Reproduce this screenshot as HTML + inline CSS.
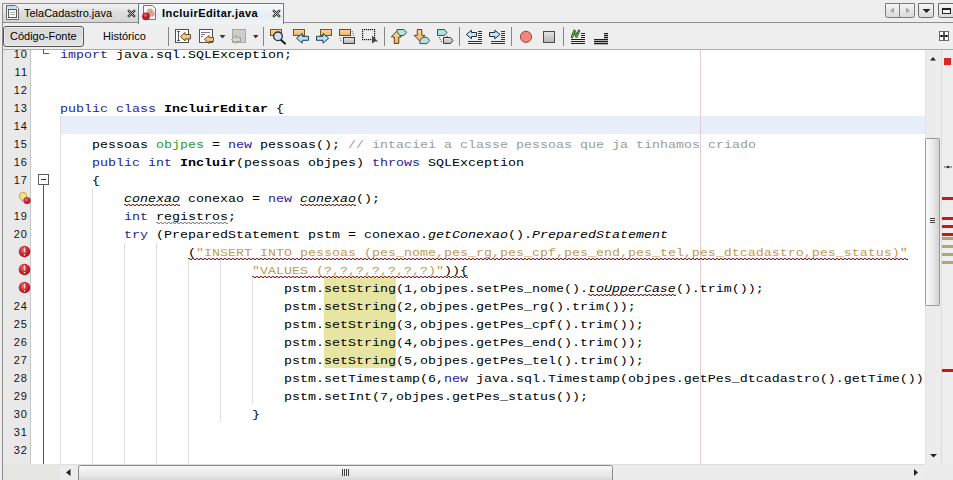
<!DOCTYPE html>
<html><head><meta charset="utf-8">
<style>
*{margin:0;padding:0;box-sizing:border-box}
html,body{width:953px;height:480px;overflow:hidden;background:#eeeeee;font-family:"Liberation Sans",sans-serif;font-size:11px;color:#000}
.a{position:absolute}
/* tabs */
#tab1{left:2px;top:3px;width:137px;height:20px;border:1px solid #8d8d8d;background:linear-gradient(#f2f2f2,#dedede 50%,#d4d4d4)}
#tab2{left:138px;top:3px;width:146px;height:21px;border:1px solid #6f7a84;border-bottom:none;background:linear-gradient(#f4f8fb,#e6eef4 60%,#eef3f6)}
#tabline{left:283px;top:22px;width:670px;height:1px;background:#8d8d8d}
.tt{top:6px;line-height:14px;white-space:nowrap}
/* toolbar */
#btn1{left:3px;top:26px;width:81px;height:21px;border:1px solid #555;border-radius:3px;background:linear-gradient(#d6d6d6,#dcdcdc 50%,#e4e4e4);box-shadow:inset 0 0 0 1px #ececec}
.sep{width:1px;background:#9a9a9a;top:27px;height:19px}
/* editor */
#edtop{left:2px;top:49px;width:951px;height:1px;background:#a3adb7}
#lborder{left:2px;top:3px;width:1px;height:477px;background:#8a8a8a}
#gutter{left:3px;top:50px;width:27px;height:414px;background:#e9e9e9}
#gline{left:30px;top:50px;width:1px;height:414px;background:#c6c6c6}
#fold{left:31px;top:50px;width:29px;height:414px;background:#fff}
#text{left:60px;top:50px;width:865px;height:414px;background:#fff;overflow:hidden}
.ln{position:absolute;left:0;width:25px;margin-top:1px;text-align:right;font-size:11px;letter-spacing:1px;line-height:18px;color:#111}
.cl{position:absolute;left:0;white-space:pre;font-family:"Liberation Mono",monospace;font-size:13.333px;line-height:18px;color:#000;margin-top:1.5px;transform:scaleY(0.87);transform-origin:0 12.5px}
.k{color:#1e1e96}
.b{font-weight:bold}
.g{color:#2d9a2d}
.c{color:#9b9b9b}
.s{color:#c29a55}
.i{font-style:italic}
.hl{background:#e6e6a2}
.guide{position:absolute;width:1px;background:#dfdfdf}
</style></head><body>

<!-- tab bar -->
<div id="lborder" class="a"></div>
<div id="tab1" class="a"></div>
<div id="tab2" class="a"></div>
<div id="tabline" class="a"></div>
<div class="a tt" style="left:24px">TelaCadastro.java</div>
<div class="a tt b" style="left:162px;letter-spacing:0.45px">IncluirEditar.java</div>

<!-- toolbar -->
<div id="btn1" class="a"></div>
<div class="a" style="left:10px;top:29px;line-height:14px">Código-Fonte</div>
<div class="a" style="left:103px;top:29px;line-height:14px">Histórico</div>

<!-- ICONS -->
<svg class="a" style="left:0;top:0" width="953" height="50" viewBox="0 0 953 50">
<defs>
<linearGradient id="gbtn" x1="0" y1="0" x2="0" y2="1"><stop offset="0" stop-color="#f6f6f6"/><stop offset="1" stop-color="#d9d9d9"/></linearGradient>
<linearGradient id="gsq" x1="0" y1="0" x2="0" y2="1"><stop offset="0" stop-color="#e6e6e6"/><stop offset="1" stop-color="#b4b4b4"/></linearGradient>
<linearGradient id="gor" x1="0" y1="0" x2="0" y2="1"><stop offset="0" stop-color="#f7d9a4"/><stop offset="1" stop-color="#e9b36a"/></linearGradient>
</defs>
<!-- tab1 icon -->
<path d="M6.5,5.5 H15.5 L18.5,8.5 V19.5 H6.5 Z" fill="#f2f6fa" stroke="#6a6a6a"/>
<rect x="7" y="6" width="8.5" height="3.5" fill="#c9dcee"/>
<rect x="8.5" y="9.5" width="8" height="8" fill="#fbfdf8" stroke="#585858"/>
<rect x="10" y="12" width="5" height="1" fill="#a8b8a8"/>
<rect x="10" y="14" width="5" height="1" fill="#a8b8a8"/>
<!-- tab close x -->
<g stroke-linecap="round" fill="none">
<path d="M128.8,10.8 L134.2,16.2 M134.2,10.8 L128.8,16.2" stroke="#333" stroke-width="2.5"/>
<path d="M128.8,10.8 L134.2,16.2 M134.2,10.8 L128.8,16.2" stroke="#d8d8d8" stroke-width="0.8"/>
<path d="M273.8,10.8 L279.2,16.2 M279.2,10.8 L273.8,16.2" stroke="#333" stroke-width="2.5"/>
<path d="M273.8,10.8 L279.2,16.2 M279.2,10.8 L273.8,16.2" stroke="#e6eef2" stroke-width="0.8"/>
</g>
<!-- tab2 java icon -->
<path d="M143.5,5.5 H152.5 L155.5,8.5 V19.5 H143.5 Z" fill="#f6f4f4" stroke="#757575"/>
<circle cx="150" cy="11.5" r="3" fill="#d9ab82"/>
<circle cx="152" cy="14" r="2.3" fill="#e3a89a" stroke="#b07060" stroke-width="0.6"/>
<circle cx="146" cy="16.3" r="3.9" fill="#b51d2a"/>
<circle cx="145.3" cy="15.2" r="1.6" fill="#e05a60"/>
<!-- right tab buttons -->
<path d="M885.5,3.5 H914.5 V15.5 Q914.5,17.5 912.5,17.5 H887.5 Q885.5,17.5 885.5,15.5 Z" fill="url(#gbtn)" stroke="#7b7b7b"/>
<line x1="899.5" y1="4" x2="899.5" y2="17" stroke="#7b7b7b"/>
<polygon points="894,7.5 894,13.5 890,10.5" fill="#a6a6a6"/>
<polygon points="906,7.5 906,13.5 910,10.5" fill="#a6a6a6"/>
<path d="M918.5,3.5 H933.5 V15.5 Q933.5,17.5 931.5,17.5 H920.5 Q918.5,17.5 918.5,15.5 Z" fill="url(#gbtn)" stroke="#6b6b6b"/>
<polygon points="922.5,9 930.5,9 926.5,13" fill="#222"/>
<path d="M938.5,3.5 H955 V17.5 H940.5 Q938.5,17.5 938.5,15.5 Z" fill="url(#gbtn)" stroke="#6b6b6b"/>
<rect x="942.5" y="8.5" width="8" height="5" fill="#f4f4f4" stroke="#222"/>
<rect x="942" y="8" width="9" height="2" fill="#222"/>
<!-- toolbar icon 1: I-beam + arrow -->
<rect x="175.5" y="29.5" width="13" height="13" fill="#fdfdfd" stroke="#505050"/>
<path d="M177,31.5 H180 M178.5,31.5 V40.5 M177,40.5 H180" stroke="#555" fill="none"/>
<path d="M180.5,36.5 L185,32.5 V34.5 H190.5 V39 H185 V41 Z" fill="url(#gor)" stroke="#6e4f1c"/>
<!-- icon 2 -->
<rect x="199.5" y="29.5" width="13" height="13" fill="#fbfbfd" stroke="#525252"/>
<path d="M201,32.5 H210 M201,34.5 H205 M201,36.5 H203" stroke="#7a7a8a" fill="none"/>
<path d="M204.5,39.5 L209,35.5 V37.5 H213.5 V41.5 H209 V43.5 Z" fill="url(#gor)" stroke="#6e4f1c"/>
<polygon points="219.5,35 225.5,35 222.5,38.5" fill="#3a3a3a"/>
<!-- icon 3 disabled -->
<rect x="232.5" y="29.5" width="13" height="13" fill="#cdcdcd" stroke="#a8a8a8"/>
<path d="M231.5,39.5 L236,35.5 V37.5 H240.5 V41.5 H236 V43.5 Z" fill="#d6d6cc" stroke="#a0a098"/>
<polygon points="253,35 258.5,35 255.7,38.5" fill="#333"/>
<!-- separators -->
<g fill="#868686">
<rect x="168" y="27" width="1" height="19"/>
<rect x="263" y="27" width="1" height="19"/>
<rect x="384" y="27" width="1" height="19"/>
<rect x="459" y="27" width="1" height="19"/>
<rect x="511" y="27" width="1" height="19"/>
<rect x="563" y="27" width="1" height="19"/>
</g>
<!-- search -->
<rect x="270.5" y="29.5" width="11" height="6" fill="url(#gor)" stroke="#745625"/>
<line x1="280.5" y1="39.5" x2="285" y2="43.5" stroke="#222" stroke-width="2.2" stroke-linecap="round"/>
<circle cx="278" cy="36.3" r="4.3" fill="#cfe3ef" stroke="#2c2c2c" stroke-width="1.3"/>
<!-- back -->
<rect x="293.5" y="29.5" width="11" height="6" fill="url(#gor)" stroke="#745625"/>
<path d="M296.5,38.3 L302.2,33.5 V36.3 H308.5 V40.3 H302.2 V43.2 Z" fill="#b9def3" stroke="#1f3f55"/>
<!-- forward -->
<rect x="320.5" y="29.5" width="11" height="6" fill="url(#gor)" stroke="#745625"/>
<path d="M328.7,38.3 L323,33.5 V36.3 H316.5 V40.3 H323 V43.2 Z" fill="#b9def3" stroke="#1f3f55"/>
<!-- toggle -->
<rect x="339.5" y="29.5" width="11" height="6" fill="url(#gor)" stroke="#6a4d1e"/>
<rect x="343.5" y="37.5" width="11" height="6" fill="url(#gsq)" stroke="#3e3e3e"/>
<path d="M352,31 L354,36 M340,38 L341.5,42" stroke="#555" stroke-dasharray="1,1" fill="none"/>
<!-- select rect -->
<g fill="#111"><rect x="362" y="29" width="1.2" height="1.2"/><rect x="362" y="31" width="1.2" height="1.2"/><rect x="362" y="33" width="1.2" height="1.2"/><rect x="362" y="35" width="1.2" height="1.2"/><rect x="362" y="37" width="1.2" height="1.2"/><rect x="362" y="39" width="1.2" height="1.2"/><rect x="364" y="29" width="1.2" height="1.2"/><rect x="364" y="39" width="1.2" height="1.2"/><rect x="366" y="29" width="1.2" height="1.2"/><rect x="366" y="39" width="1.2" height="1.2"/><rect x="368" y="29" width="1.2" height="1.2"/><rect x="368" y="39" width="1.2" height="1.2"/><rect x="370" y="29" width="1.2" height="1.2"/><rect x="370" y="39" width="1.2" height="1.2"/><rect x="372" y="29" width="1.2" height="1.2"/><rect x="372" y="39" width="1.2" height="1.2"/><rect x="374" y="29" width="1.2" height="1.2"/><rect x="374" y="31" width="1.2" height="1.2"/><rect x="374" y="33" width="1.2" height="1.2"/><rect x="374" y="35" width="1.2" height="1.2"/><rect x="374" y="37" width="1.2" height="1.2"/><rect x="374" y="39" width="1.2" height="1.2"/></g>
<polygon points="372,35.5 378,41.5 375,41.5 372,43.5" fill="#444"/>
<!-- up -->
<path d="M397,29.5 H404 L406.5,32.3 L404,35.5 H397 Z" fill="#b5e2dc" stroke="#2d5a55"/>
<path d="M396.3,31.5 L401.5,37 H398.8 V43.5 H394.3 V37 H391.3 Z" fill="url(#gor)" stroke="#5e4418"/>
<!-- down -->
<path d="M419.8,37.3 H427 L429.6,40.5 L427,43.6 H419.8 Z" fill="#b5e2dc" stroke="#2d5a55"/>
<path d="M417.3,29.5 H421.8 V35.3 H425 L419.5,40.8 L414,35.3 H417.3 Z" fill="url(#gor)" stroke="#5e4418"/>
<!-- third tags -->
<path d="M437.5,29.5 H444.5 L447,32.5 L444.5,35.5 H437.5 Z" fill="#b0e0da" stroke="#2d5a55"/>
<path d="M443.5,37.5 H450.5 L453,40.5 L450.5,43.5 H443.5 Z" fill="url(#gsq)" stroke="#3c3c3c"/>
<path d="M439,37 L442,43 M447,36 L447,37" stroke="#333" stroke-dasharray="1,1.2" fill="none"/>
<!-- shift left -->
<path d="M466.3,34.5 L471.5,30.2 V32.5 H476.5 V36.5 H471.5 V38.8 Z" fill="#c6e4f5" stroke="#1f2f3f"/>
<g fill="#333">
<rect x="478" y="31" width="4" height="1"/><rect x="478" y="33" width="4" height="1"/><rect x="478" y="35" width="4" height="1"/><rect x="478" y="37" width="4" height="1"/><rect x="478" y="39" width="4" height="1"/>
<rect x="468" y="41" width="14" height="1"/><rect x="468" y="43" width="14" height="1"/>
<rect x="501" y="31" width="4" height="1"/><rect x="501" y="33" width="4" height="1"/><rect x="501" y="35" width="4" height="1"/><rect x="501" y="37" width="4" height="1"/><rect x="501" y="39" width="4" height="1"/>
<rect x="491" y="41" width="14" height="1"/><rect x="491" y="43" width="14" height="1"/>
</g>
<path d="M500,34.5 L494.8,30.2 V32.5 H489.5 V36.5 H494.8 V38.8 Z" fill="#c6e4f5" stroke="#1f2f3f"/>
<!-- record / stop -->
<circle cx="526" cy="36.8" r="5.6" fill="#f2877a" stroke="#8f4a48"/>
<rect x="543.5" y="31.5" width="11" height="11" fill="url(#gsq)" stroke="#4a4a4a"/>
<!-- N icon -->
<path d="M572,37 L574.5,30.8 L576.5,36.5 L579,30.8" fill="none" stroke="#224a18" stroke-width="2.4" stroke-linejoin="round" stroke-linecap="round"/>
<path d="M572,37 L574.5,30.8 L576.5,36.5 L579,30.8" fill="none" stroke="#78d058" stroke-width="0.9" stroke-linejoin="round"/>
<g fill="#1e1e1e">
<rect x="581" y="33" width="4" height="1"/><rect x="581" y="35" width="4" height="1"/><rect x="581" y="37" width="4" height="1"/>
<rect x="571" y="39" width="14" height="1"/><rect x="571" y="41" width="14" height="1"/><rect x="571" y="43" width="14" height="1"/>
<rect x="604" y="33" width="4" height="1.3"/><rect x="604" y="35" width="4" height="1.3"/><rect x="604" y="37" width="4" height="1.3"/>
<rect x="594" y="39" width="14" height="1.3"/><rect x="594" y="41" width="14" height="1.3"/><rect x="594" y="43" width="14" height="1.3"/>
</g>
<!-- split icon -->
<rect x="939.5" y="31.5" width="9" height="9" fill="#fff" stroke="#6a6a6a"/>
<path d="M940,36 H948 M944,32 V40" stroke="#000" stroke-width="1.2"/>
<circle cx="941.5" cy="36" r="1" fill="#000"/><circle cx="946.5" cy="36" r="1" fill="#000"/>
</svg>
<!-- /ICONS -->
<!-- editor -->
<div id="edtop" class="a"></div>
<div id="gutter" class="a" style="overflow:hidden">
  <div class="ln" style="top:-6px">10</div>
  <div class="ln" style="top:12px">11</div>
  <div class="ln" style="top:30px">12</div>
  <div class="ln" style="top:48px">13</div>
  <div class="ln" style="top:66px">14</div>
  <div class="ln" style="top:84px">15</div>
  <div class="ln" style="top:102px">16</div>
  <div class="ln" style="top:120px">17</div>
  <div class="ln" style="top:156px">19</div>
  <div class="ln" style="top:174px">20</div>
  <div class="ln" style="top:246px">24</div>
  <div class="ln" style="top:264px">25</div>
  <div class="ln" style="top:282px">26</div>
  <div class="ln" style="top:300px">27</div>
  <div class="ln" style="top:318px">28</div>
  <div class="ln" style="top:336px">29</div>
  <div class="ln" style="top:354px">30</div>
  <div class="ln" style="top:372px">31</div>
  <div class="ln" style="top:390px">32</div>
</div>
<div id="gline" class="a"></div>
<div id="fold" class="a"></div>
<div id="text" class="a">
  <!-- current line -->
  <div class="a" style="left:0;top:66px;width:865px;height:18px;background:#e8eef9"></div>
  <!-- right margin -->
  <div class="a" style="left:640px;top:0;width:1px;height:414px;background:#e3cdd0"></div>
  <!-- guides -->
  <div class="guide" style="left:0;top:66px;height:348px"></div>
  <div class="guide" style="left:32px;top:138px;height:276px"></div>
  <div class="guide" style="left:64px;top:192px;height:222px"></div>
  <div class="guide" style="left:96px;top:192px;height:222px"></div>
  <div class="guide" style="left:128px;top:210px;height:204px"></div>
  <div class="guide" style="left:160px;top:210px;height:162px"></div>
  <div class="guide" style="left:192px;top:228px;height:126px"></div>
  <!-- highlights -->
  <div class="a hl" style="left:264px;top:228px;width:72px;height:90px"></div>
  <div id="code">
  <div class="cl" style="top:-6px"><span class="k">import</span> java.sql.SQLException;</div>
  <div class="cl" style="top:48px"><span class="k">public</span> <span class="k">class</span> <span class="b">IncluirEditar</span> {</div>
  <div class="cl" style="top:84px">    pessoas <span class="g">objpes</span> = <span class="k">new</span> pessoas(); <span class="c">// intaciei a classe pessoas que ja tinhamos criado</span></div>
  <div class="cl" style="top:102px">    <span class="k">public</span> <span class="k">int</span> <span class="b">Incluir</span>(pessoas objpes) <span class="k">throws</span> SQLException</div>
  <div class="cl" style="top:120px">    {</div>
  <div class="cl" style="top:138px">        <span class="i er">conexao</span> conexao = <span class="k">new</span> <span class="i er">conexao</span>();</div>
  <div class="cl" style="top:156px">        <span class="k">int</span> <span class="wr">registros</span>;</div>
  <div class="cl" style="top:174px">        <span class="k">try</span> (PreparedStatement pstm = conexao.<span class="i">getConexao</span>().<span class="i">PreparedStatement</span></div>
  <div class="cl" style="top:192px">                <span class="er">(<span class="s">"INSERT INTO pessoas (pes_nome,pes_rg,pes_cpf,pes_end,pes_tel,pes_dtcadastro,pes_status)"</span></span></div>
  <div class="cl" style="top:210px">                        <span class="er"><span class="s">"VALUES (?,?,?,?,?,?,?)"</span>)){</span></div>
  <div class="cl" style="top:228px">                            pstm.setString(1,objpes.setPes_nome().<span class="i er">toUpperCase</span>().trim());</div>
  <div class="cl" style="top:246px">                            pstm.setString(2,objpes.getPes_rg().trim());</div>
  <div class="cl" style="top:264px">                            pstm.setString(3,objpes.getPes_cpf().trim());</div>
  <div class="cl" style="top:282px">                            pstm.setString(4,objpes.getPes_end().trim());</div>
  <div class="cl" style="top:300px">                            pstm.setString(5,objpes.getPes_tel().trim());</div>
  <div class="cl" style="top:318px">                            pstm.setTimestamp(6,<span class="k">new</span> java.sql.Timestamp(objpes.getPes_dtcadastro().getTime())</div>
  <div class="cl" style="top:336px">                            pstm.setInt(7,objpes.getPes_status());</div>
  <div class="cl" style="top:354px">                        }</div>
</div>
</div>
<!-- EDX -->
<svg class="a" style="left:0;top:0" width="953" height="480" viewBox="0 0 953 480">
<defs>
<radialGradient id="gerr" cx="0.4" cy="0.35" r="0.7"><stop offset="0" stop-color="#f06470"/><stop offset="0.6" stop-color="#c8202e"/><stop offset="1" stop-color="#9a1020"/></radialGradient>
<linearGradient id="gvth" x1="0" y1="0" x2="1" y2="0"><stop offset="0" stop-color="#fbfbfb"/><stop offset="0.5" stop-color="#ececec"/><stop offset="1" stop-color="#cfcfcf"/></linearGradient>
<linearGradient id="ghth" x1="0" y1="0" x2="0" y2="1"><stop offset="0" stop-color="#fafafa"/><stop offset="0.55" stop-color="#e4e4e4"/><stop offset="1" stop-color="#c4c4c4"/></linearGradient>
</defs>
<!-- fold marks -->
<path d="M43.5,49 V53.5 H49" fill="none" stroke="#555"/>
<rect x="38.5" y="174.5" width="10" height="10" fill="#fff" stroke="#5a5a5a"/>
<line x1="41" y1="179.5" x2="46" y2="179.5" stroke="#333"/>
<line x1="43.5" y1="185" x2="43.5" y2="464" stroke="#555"/>
<!-- bulb + error -->
<circle cx="23" cy="196" r="3.8" fill="#f4e27c" stroke="#b0a040" stroke-width="0.8"/>
<rect x="21" y="199" width="4" height="3" fill="#c8c8c0"/>
<circle cx="27" cy="200.5" r="3.6" fill="url(#gerr)"/>
<!-- error icons -->
<g>
<circle cx="24.5" cy="251.5" r="5.8" fill="url(#gerr)"/>
<circle cx="24.5" cy="269.5" r="5.8" fill="url(#gerr)"/>
<circle cx="24.5" cy="287.5" r="5.8" fill="url(#gerr)"/>
<path d="M24.5,247.5 V252.5 M24.5,265.5 V270.5 M24.5,283.5 V288.5" stroke="#f6d8d8" stroke-width="1.4"/>
<path d="M24.5,254 V255.5 M24.5,272 V273.5 M24.5,290 V291.5" stroke="#f8e0a0" stroke-width="1.4"/>
</g>
<!-- vertical scrollbar -->
<rect x="925" y="50" width="16" height="414" fill="#ececec"/>
<line x1="925.5" y1="50" x2="925.5" y2="464" stroke="#e2e2e2"/>
<polygon points="930,60.5 933,57 936,60.5" fill="#222"/>
<rect x="925.5" y="138.5" width="14" height="167" rx="0.8" fill="url(#gvth)" stroke="#9a9a9a"/>
<path d="M930,218.5 H935 M930,220.5 H935 M930,222.5 H935" stroke="#444"/>
<polygon points="930,454 937,454 933.5,457.5" fill="#222"/>
<!-- error stripe -->
<rect x="941" y="50" width="12" height="414" fill="#eeeeee"/>
<line x1="941.5" y1="50" x2="941.5" y2="464" stroke="#dcdcdc"/>
<rect x="944" y="58" width="7" height="7" fill="#e02424"/>
<path d="M944,167 H952" stroke="#555"/>
<circle cx="948" cy="167" r="1.2" fill="#333"/>
<g fill="#c41a1a">
<rect x="942" y="197" width="11" height="3"/>
<rect x="942" y="217" width="11" height="3"/>
<rect x="942" y="225" width="11" height="3"/>
<rect x="942" y="233" width="11" height="3"/>
<rect x="942" y="369" width="11" height="3"/>
</g>
<g fill="#a9a878">
<rect x="942" y="237" width="11" height="3"/>
<rect x="942" y="245" width="11" height="3"/>
<rect x="942" y="253" width="11" height="3"/>
<rect x="942" y="261" width="11" height="3"/>
</g>
<!-- bottom area -->
<rect x="3" y="464" width="950" height="16" fill="#ebebeb"/>
<rect x="3" y="464" width="57" height="16" fill="#e6e6e2"/>
<rect x="60" y="464" width="865" height="16" fill="#ececec"/>
<line x1="60" y1="464.5" x2="925" y2="464.5" stroke="#dedede"/>
<polygon points="70.5,469 70.5,476 66,472.5" fill="#222"/>
<rect x="78.5" y="465.5" width="534" height="20" rx="2" fill="url(#ghth)" stroke="#8a8a8a"/>
<path d="M342.5,469 V476 M344.5,469 V476 M346.5,469 V476 M348.5,469 V476" stroke="#444"/>
<polygon points="914,469 914,476 918,472.5" fill="#222"/>
</svg>
<!-- /EDX -->
<!-- waves -->
<svg class="a" width="0" height="0" style="left:0;top:0"><defs><pattern id="pr" width="4" height="2" patternUnits="userSpaceOnUse"><rect x="0" y="0" width="2" height="1" fill="#9a2a2a"/><rect x="2" y="1" width="2" height="1" fill="#8a2020"/><rect x="1" y="1" width="1" height="1" fill="#e0b0b0"/><rect x="3" y="0" width="1" height="1" fill="#e0b0b0"/></pattern><pattern id="pg" width="4" height="2" patternUnits="userSpaceOnUse"><rect x="0" y="0" width="2" height="1" fill="#8c8c8c"/><rect x="2" y="1" width="2" height="1" fill="#8c8c8c"/><rect x="1" y="1" width="1" height="1" fill="#d0d0d0"/><rect x="3" y="0" width="1" height="1" fill="#d0d0d0"/></pattern></defs></svg>
<svg class="a" width="56" height="2" style="left:124px;top:204px"><rect width="56" height="2" fill="url(#pr)"/></svg>
<svg class="a" width="56" height="2" style="left:300px;top:204px"><rect width="56" height="2" fill="url(#pr)"/></svg>
<svg class="a" width="72" height="2" style="left:156px;top:222px"><rect width="72" height="2" fill="url(#pg)"/></svg>
<svg class="a" width="720" height="2" style="left:188px;top:258px"><rect width="720" height="2" fill="url(#pr)"/></svg>
<svg class="a" width="216" height="2" style="left:252px;top:276px"><rect width="216" height="2" fill="url(#pr)"/></svg>
<svg class="a" width="88" height="2" style="left:588px;top:294px"><rect width="88" height="2" fill="url(#pr)"/></svg>
</body></html>
